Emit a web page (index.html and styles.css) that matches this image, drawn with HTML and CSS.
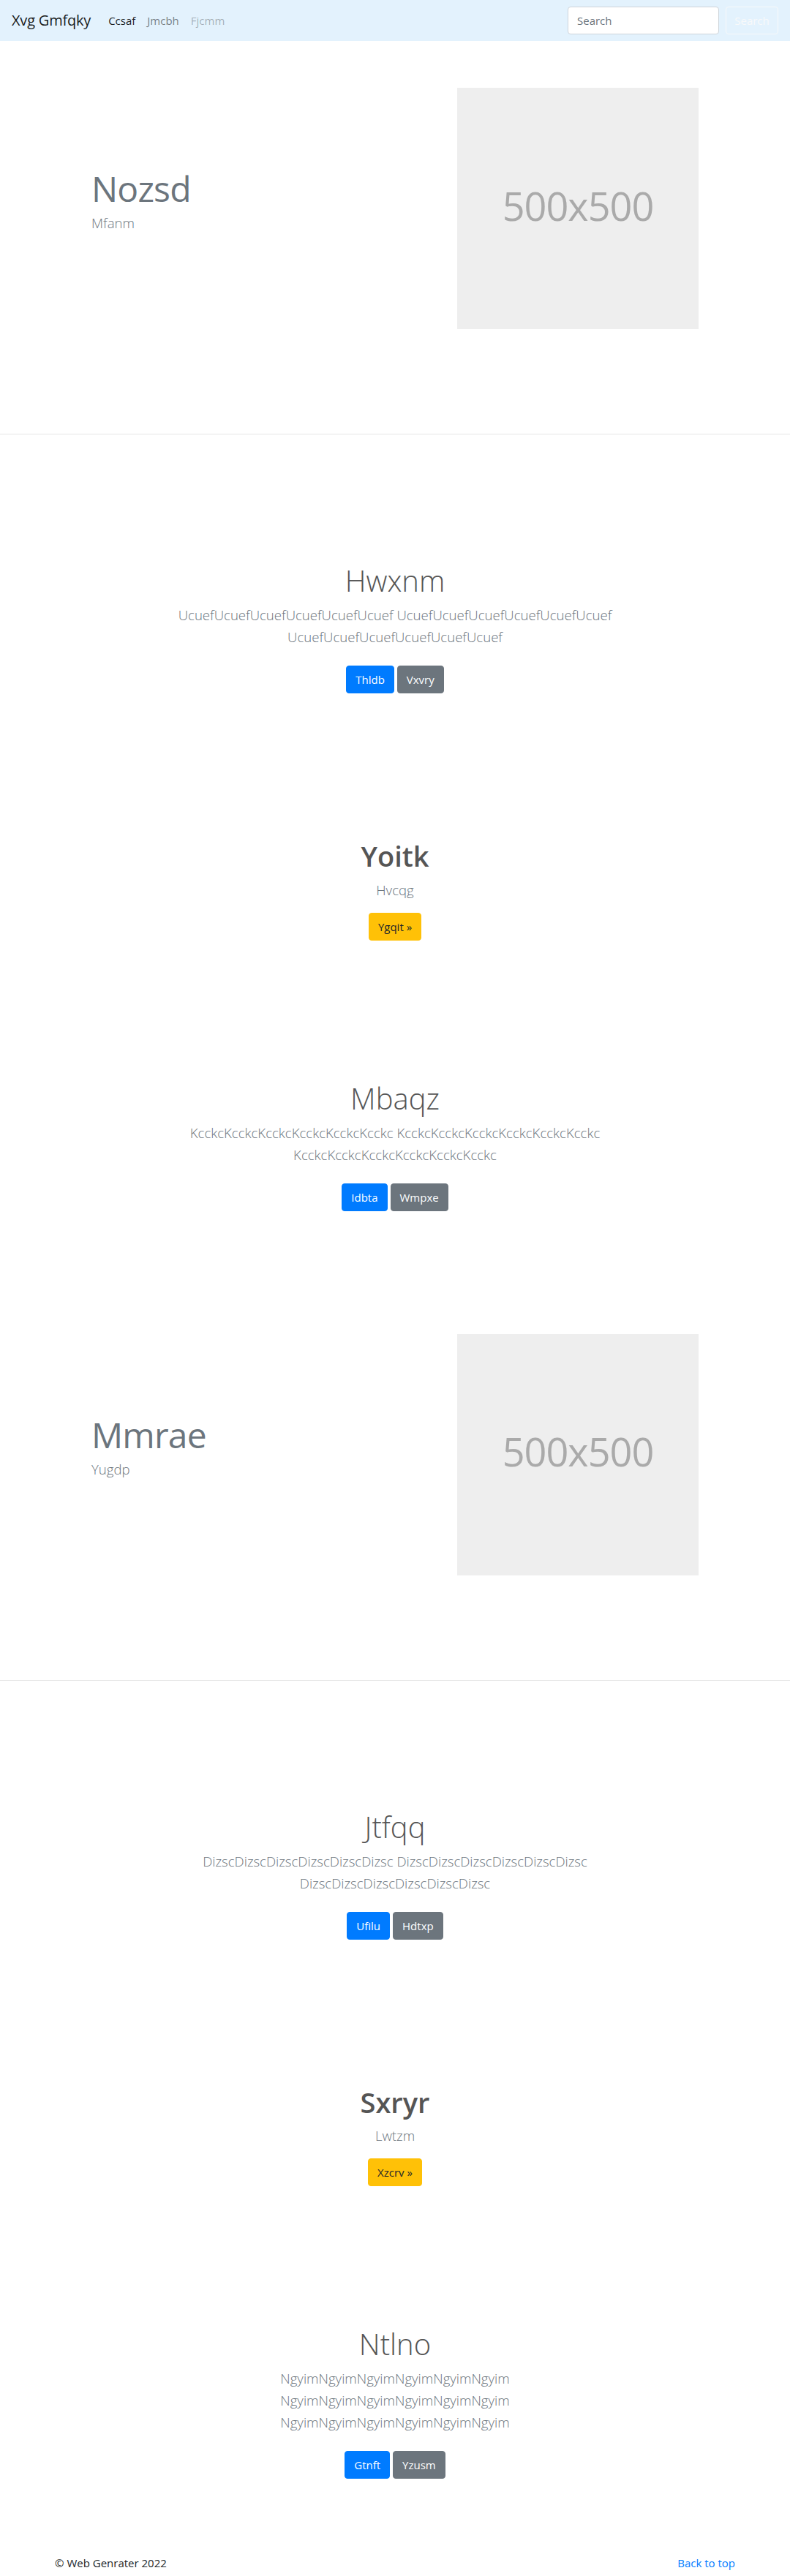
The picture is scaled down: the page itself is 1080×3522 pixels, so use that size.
FILE: index.html
```html
<!DOCTYPE html>
<html lang="en">
<head>
<meta charset="utf-8">
<title>Xvg Gmfqky</title>
<link rel="stylesheet" href="styles.css">
</head>
<body>
<nav class="navbar">
  <a class="brand" href="#">Xvg Gmfqky</a>
  <ul class="nav-links">
    <li><a class="nav-link active" href="#">Ccsaf</a></li>
    <li><a class="nav-link" href="#">Jmcbh</a></li>
    <li><a class="nav-link disabled" href="#">Fjcmm</a></li>
  </ul>
  <form class="search-form">
    <input class="search-input" type="search" placeholder="Search">
    <button class="search-btn" type="button">Search</button>
  </form>
</nav>

<section class="feature">
  <div class="feature-row">
    <div class="feature-text">
      <h2 class="feature-heading">Nozsd</h2>
      <p class="lead">Mfanm</p>
    </div>
    <div class="feature-media">
      <div class="placeholder">500x500</div>
    </div>
  </div>
</section>
<hr class="divider">

<section class="block">
  <div class="block-inner">
    <h1 class="block-title">Hwxnm</h1>
    <p class="lead">UcuefUcuefUcuefUcuefUcuefUcuef UcuefUcuefUcuefUcuefUcuefUcuef UcuefUcuefUcuefUcuefUcuefUcuef</p>
    <p class="btn-row"><a class="btn btn-primary" href="#">Thldb</a><a class="btn btn-secondary" href="#">Vxvry</a></p>
  </div>
</section>

<section class="block">
  <div class="block-inner">
    <h1 class="block-title bold">Yoitk</h1>
    <p class="lead">Hvcqg</p>
    <p class="btn-row tight"><a class="btn btn-warning" href="#">Ygqit »</a></p>
  </div>
</section>

<section class="block">
  <div class="block-inner">
    <h1 class="block-title">Mbaqz</h1>
    <p class="lead">KcckcKcckcKcckcKcckcKcckcKcckc KcckcKcckcKcckcKcckcKcckcKcckc KcckcKcckcKcckcKcckcKcckcKcckc</p>
    <p class="btn-row"><a class="btn btn-primary" href="#">Idbta</a><a class="btn btn-secondary" href="#">Wmpxe</a></p>
  </div>
</section>

<section class="feature">
  <div class="feature-row">
    <div class="feature-text">
      <h2 class="feature-heading">Mmrae</h2>
      <p class="lead">Yugdp</p>
    </div>
    <div class="feature-media">
      <div class="placeholder">500x500</div>
    </div>
  </div>
</section>
<hr class="divider">

<section class="block">
  <div class="block-inner">
    <h1 class="block-title">Jtfqq</h1>
    <p class="lead">DizscDizscDizscDizscDizscDizsc DizscDizscDizscDizscDizscDizsc DizscDizscDizscDizscDizscDizsc</p>
    <p class="btn-row"><a class="btn btn-primary" href="#">Ufilu</a><a class="btn btn-secondary" href="#">Hdtxp</a></p>
  </div>
</section>

<section class="block">
  <div class="block-inner">
    <h1 class="block-title bold">Sxryr</h1>
    <p class="lead">Lwtzm</p>
    <p class="btn-row tight"><a class="btn btn-warning" href="#">Xzcrv »</a></p>
  </div>
</section>

<section class="block">
  <div class="block-inner">
    <h1 class="block-title">Ntlno</h1>
    <p class="lead">NgyimNgyimNgyimNgyimNgyimNgyim NgyimNgyimNgyimNgyimNgyimNgyim NgyimNgyimNgyimNgyimNgyimNgyim</p>
    <p class="btn-row"><a class="btn btn-primary" href="#">Gtnft</a><a class="btn btn-secondary" href="#">Yzusm</a></p>
  </div>
</section>

<footer class="footer">
  <p class="copy">© Web Genrater 2022</p>
  <p class="copy"><a class="top-link" href="#">Back to top</a></p>
</footer>
</body>
</html>
```

FILE: styles.css
```css
* { box-sizing: border-box; }

body {
  margin: 0;
  font-family: "Open Sans", "Noto Sans", sans-serif;
  font-size: 16px;
  line-height: 1.5;
  color: #212529;
  background: #fff;
}

a { text-decoration: none; }

/* Navbar */
.navbar {
  display: flex;
  align-items: center;
  height: 56px;
  padding: 8px 16px;
  background-color: #e3f2fd;
}
.brand {
  font-size: 20px;
  line-height: 30px;
  padding: 5px 0;
  margin-right: 16px;
  color: rgba(0, 0, 0, 0.9);
  letter-spacing: -0.2px;
}
.nav-links {
  display: flex;
  list-style: none;
  margin: 0;
  padding: 0;
}
.nav-link {
  display: block;
  padding: 8px;
  font-size: 15px;
  color: rgba(0, 0, 0, 0.5);
}
.nav-link.active { color: rgba(0, 0, 0, 0.9); }
.nav-link.disabled { color: rgba(0, 0, 0, 0.3); }

.search-form {
  display: flex;
  align-items: center;
  margin-left: auto;
}
.search-input {
  width: 207px;
  height: 38px;
  padding: 6px 12px;
  font-family: inherit;
  font-size: 15px;
  color: #495057;
  background: #fff;
  border: 1px solid #ced4da;
  border-radius: 4px;
  margin-right: 9px;
}
.search-input::placeholder { color: #6c757d; }
.search-btn {
  width: 72px;
  height: 38px;
  padding: 6px 10px;
  font-family: inherit;
  font-size: 15px;
  color: #f8f9fa;
  background: transparent;
  border: 1px solid #f8f9fa;
  border-radius: 4px;
}

/* Feature (text + placeholder) */
.feature {
  padding: 64px 0;
}
.feature-row {
  display: flex;
  align-items: center;
  width: 860px;
  margin: 0 auto;
}
.feature-text {
  flex: 1 1 50%;
  padding: 0 15px;
}
.feature-media {
  flex: 1 1 50%;
  padding: 0 15px;
  display: flex;
  justify-content: flex-end;
}
.feature-heading {
  margin: 0 0 8px;
  font-size: 48px;
  font-weight: 400;
  line-height: 1;
  letter-spacing: -0.8px;
  color: #6c757d;
}
.placeholder {
  width: 330px;
  height: 330px;
  background: #eeeeee;
  color: #aaaaaa;
  font-size: 54px;
  letter-spacing: -1px;
  display: flex;
  align-items: center;
  justify-content: center;
  padding-bottom: 8px;
}

.divider {
  height: 0;
  border: 0;
  border-top: 1px solid rgba(0, 0, 0, 0.1);
  margin: 79px 0 80px;
}

/* Centered blocks */
.block {
  padding: 96px 0 80px;
  text-align: center;
}
.block-inner {
  max-width: 640px;
  margin: 0 auto;
  padding: 0 15px;
}
.block-title {
  margin: 0 0 8px;
  font-size: 40px;
  font-weight: 300;
  line-height: 1.2;
  color: #555;
}
.block-title.bold {
  font-weight: 600;
  font-size: 38px;
}

.lead {
  margin: 0 0 16px;
  font-size: 18.6px;
  font-weight: 300;
  line-height: 30px;
  color: #6c757d;
}

.btn-row {
  display: flex;
  justify-content: center;
  gap: 4px;
  margin: 0 0 16px;
  padding: 8px 0;
}
.btn-row.tight { padding: 0; }

.btn {
  display: inline-block;
  padding: 6px 12px;
  font-size: 15px;
  line-height: 24px;
  border: 1px solid transparent;
  border-radius: 4px;
}
.btn-primary { background: #007bff; border-color: #007bff; color: #fff; }
.btn-secondary { background: #6c757d; border-color: #6c757d; color: #fff; }
.btn-warning { background: #ffc107; border-color: #ffc107; color: #212529; }

/* Footer */
.footer {
  display: flex;
  justify-content: space-between;
  max-width: 960px;
  margin: 0 auto;
  padding: 0 15px;
}
.copy {
  margin: 0 0 16px;
  font-size: 15px;
}
.top-link { color: #007bff; }
```
